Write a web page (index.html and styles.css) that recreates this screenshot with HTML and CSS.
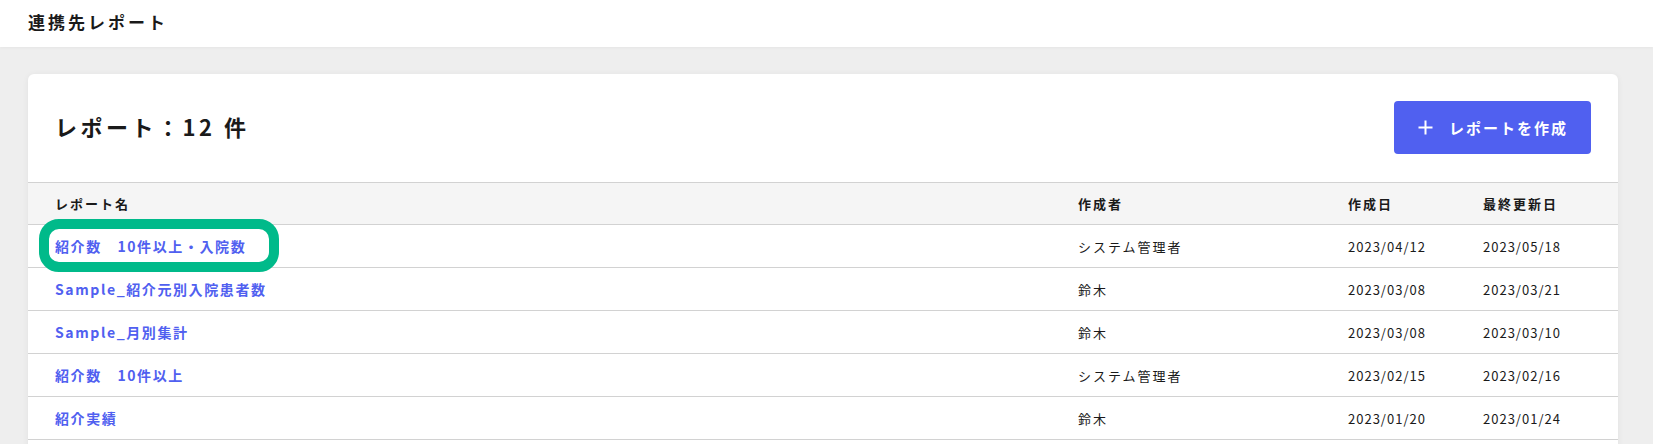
FILE: index.html
```html
<!DOCTYPE html>
<html lang="ja">
<head>
<meta charset="utf-8">
<title>連携先レポート</title>
<link rel="stylesheet" href="styles.css">
</head>
<body>
<header class="topbar">
  <h1 class="page-title">連携先レポート</h1>
</header>
<main class="content">
  <section class="card">
    <div class="card-head">
      <h2 class="count">レポート：12 件</h2>
      <button class="create-btn" type="button">
        <svg class="plus" width="15" height="15" viewBox="0 0 15 15"><path d="M7.5 0.5v14M0.5 7.5h14" stroke="#fff" stroke-width="2" fill="none"/></svg>
        <span>レポートを作成</span>
      </button>
    </div>
    <div class="table">
      <div class="row head">
        <div class="cell first">レポート名</div>
        <div class="cell">作成者</div>
        <div class="cell">作成日</div>
        <div class="cell">最終更新日</div>
      </div>
      <div class="row">
        <div class="cell first"><a class="link" href="#">紹介数　10件以上・入院数</a></div>
        <div class="cell">システム管理者</div>
        <div class="cell date">2023/04/12</div>
        <div class="cell date">2023/05/18</div>
        <div class="highlight"></div>
      </div>
      <div class="row">
        <div class="cell first"><a class="link" href="#">Sample_紹介元別入院患者数</a></div>
        <div class="cell">鈴木</div>
        <div class="cell date">2023/03/08</div>
        <div class="cell date">2023/03/21</div>
      </div>
      <div class="row">
        <div class="cell first"><a class="link" href="#">Sample_月別集計</a></div>
        <div class="cell">鈴木</div>
        <div class="cell date">2023/03/08</div>
        <div class="cell date">2023/03/10</div>
      </div>
      <div class="row">
        <div class="cell first"><a class="link" href="#">紹介数　10件以上</a></div>
        <div class="cell">システム管理者</div>
        <div class="cell date">2023/02/15</div>
        <div class="cell date">2023/02/16</div>
      </div>
      <div class="row">
        <div class="cell first"><a class="link" href="#">紹介実績</a></div>
        <div class="cell">鈴木</div>
        <div class="cell date">2023/01/20</div>
        <div class="cell date">2023/01/24</div>
      </div>
    </div>
  </section>
</main>
</body>
</html>
```

FILE: styles.css
```css
* { box-sizing: border-box; }
html, body {
  margin: 0;
  padding: 0;
  height: 100%;
  overflow: hidden;
}
body {
  font-family: "Noto Sans CJK JP", "Noto Sans", sans-serif;
  color: #1a1a1a;
  background: #eeeeee;
}
.topbar {
  height: 47px;
  background: #ffffff;
  display: flex;
  align-items: center;
  padding-left: 28px;
  box-shadow: 0 1px 3px rgba(0,0,0,0.04);
  position: relative;
}
.page-title {
  margin: 0;
  font-size: 17px;
  font-weight: 700;
  letter-spacing: 3px;
  line-height: 1;
  margin-top: -4px;
}
.content {
  padding: 27px 35px 0 28px;
}
.card {
  background: #ffffff;
  border-radius: 6px;
  box-shadow: 0 1px 6px rgba(0,0,0,0.06);
  padding-bottom: 60px;
}
.card-head {
  display: flex;
  align-items: center;
  justify-content: space-between;
  padding: 27px 27px 28px 27px;
}
.count {
  margin: 0;
  font-size: 22px;
  font-weight: 700;
  letter-spacing: 3.5px;
  line-height: 1;
  margin-top: -4px;
}
.create-btn {
  height: 53px;
  width: 197px;
  border: none;
  border-radius: 4px;
  background: #5060f0;
  color: #ffffff;
  display: flex;
  align-items: center;
  gap: 16px;
  padding: 0 20px 0 24px;
  font-family: inherit;
  font-size: 15px;
  font-weight: 700;
  letter-spacing: 2px;
  cursor: pointer;
}
.plus { flex: none; }
.table {
  border-top: 1px solid #d2d2d2;
}
.row {
  position: relative;
  display: grid;
  grid-template-columns: 1050px 270px 135px 1fr;
  align-items: center;
  height: 43px;
  border-bottom: 1px solid #d2d2d2;
  font-size: 13px;
  letter-spacing: 2px;
}
.row.head {
  height: 42px;
  background: #f5f5f5;
  font-weight: 700;
}
.cell.first {
  padding-left: 27px;
}
.link {
  color: #5060f0;
  text-decoration: none;
  font-size: 14px;
  font-weight: 700;
  letter-spacing: 1.6px;
}
.date {
  letter-spacing: 1px;
}
.highlight {
  position: absolute;
  left: 11px;
  top: -6px;
  width: 240px;
  height: 53px;
  border: 10px solid #00ba8a;
  border-radius: 20px;
  pointer-events: none;
}
```
